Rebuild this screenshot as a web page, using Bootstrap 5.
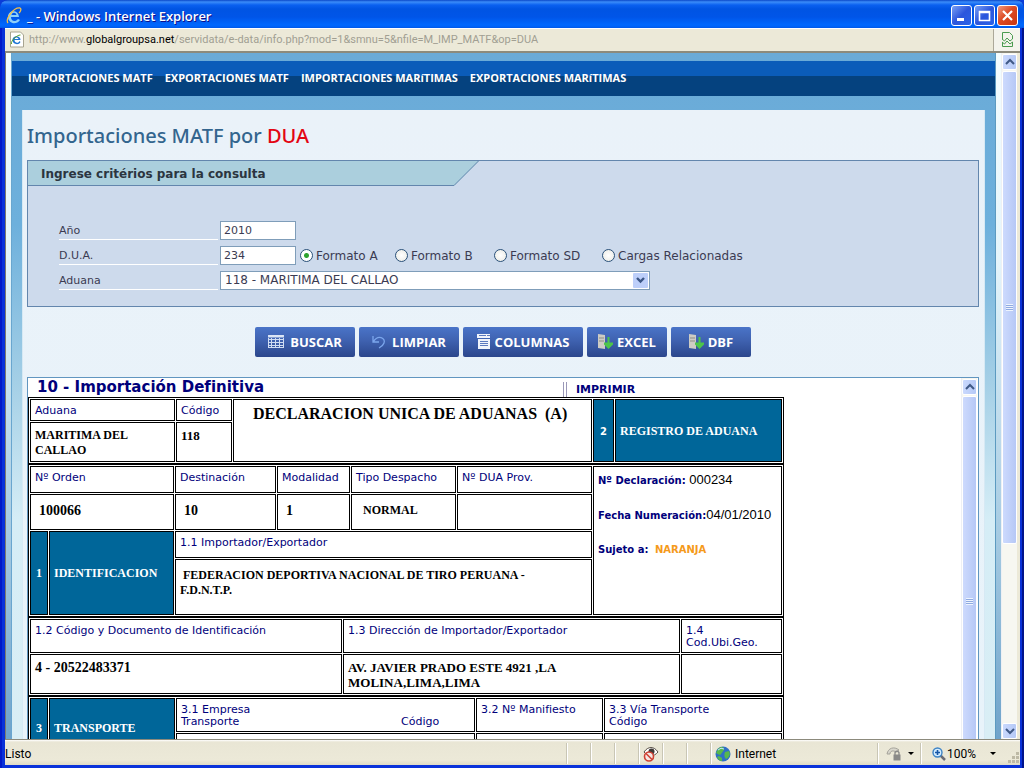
<!DOCTYPE html>
<html lang="es">
<head>
<meta charset="utf-8">
<meta name="viewport" content="width=device-width, initial-scale=1">
<title>Importaciones MATF por DUA</title>
<link href="https://cdn.jsdelivr.net/npm/bootstrap@5.3.0/dist/css/bootstrap.min.css" rel="stylesheet">
<style>
:root{--navy:#00007b;--line:#6386ad;--verdana:"DejaVu Sans",Verdana,sans-serif;--treb:"Open Sans","Trebuchet MS",sans-serif;--tahoma:"Roboto",Tahoma,sans-serif}
body{font-family:var(--verdana);font-size:11px;line-height:14px;background:#0a3cd8;overflow:hidden}
button{font:inherit}
svg{display:block;flex:none}
.win{background:#0831d9;padding:0 4px 3px 5px;border-radius:8px 8px 0 0;box-shadow:inset 2px 0 #0019c8,inset -2px 0 #00138c}
.titlebar{height:30px;margin:0 -4px 0 -5px;padding:4px 6px 0 6px;gap:5px;border-radius:8px 8px 0 0;color:#fff;font:600 13px/18px var(--treb);text-shadow:1px 1px #0f1089;
background:linear-gradient(#0a47c8 0,#3b8cf9 2px,#0a60f0 5px,#0054e3 9px,#0055e8 17px,#0068fe 25px,#0061f5 27px,#0040c0 30px)}
.cap{width:21px;height:21px;padding:0;border:1px solid #fff;border-radius:3px;background:linear-gradient(135deg,#7aa0f5,#2c56dc 50%,#2a62e8)}
.cap svg{margin:auto}
.cap-close{background:linear-gradient(135deg,#f09a80,#dd4a24 45%,#c83510)}
.address{height:25px;background:#ece9d8;border-bottom:2px solid #8c8a7c;border-top:1px solid #fff}
.url{font:11px/22px var(--tahoma);color:#a19f93;text-decoration:none}
.url b{font-weight:400;color:#000}
.broken{border:0;border-left:1px solid #aca899;background:#f4f3ec;width:27px}
.outer{background:linear-gradient(#f4fdff,#e4f5fb 30%,#a6cbe2 70%,#6fa3ca);padding:0 5px;border-left:1px solid #7d7b6e}
.sheet{background:linear-gradient(#6aaad7 0,#6db0dc 25%,#a4cfe6 48%,#d5edf6 68%,#d9eef5);border-left:1px solid #69a6cf;border-right:1px solid #5c9ac0;padding:0 10px}
.menu{margin:8px -10px 14px;height:35px;padding:0 16px;gap:12px;background:linear-gradient(#0b5cb9 0 15px,#05427f 15px)}
.menu a{color:#fff;text-decoration:none;font:700 11px/16px var(--treb)}
.content{background:linear-gradient(#eaf2f9,#e8f3fa);padding:0 5px 0 4px;border-left:1px solid #d6e9f4;border-right:1px solid #d6e9f4}
.heading{font:500 20px/28px "Noto Sans",var(--treb);color:#33658e;margin:12px 0 10px}
.heading b{font-weight:500;color:#e30613}
.criteria{border:1px solid var(--line);background:#cddaec;height:147px}
.tabhead{background:#abcfdd;border-bottom:1px solid var(--line);height:25px;width:426px;padding-left:13px;font:700 12px/26px var(--verdana);color:#2b3540;margin:0}
.fields{padding:35px 31px 0;color:#3b3b52}
.frow{height:25px}
.flabel{width:159px;height:19px;line-height:19px;border-bottom:1px solid #fff;margin-right:2px}
.txt{width:76px;height:19px;border:1px solid #7f9db9;background:#fff;padding:0 3px;font:11px/17px var(--verdana);color:#3b3b52}
.radios{height:20px;font-size:12px}
.rad{appearance:none;width:13px;height:13px;margin:0 3px 0 0;border:1px solid #2b5179;border-radius:50%;background:radial-gradient(#fff,#e9e9e2)}
.rad:checked{background:radial-gradient(#2fa32f 0 2px,#fff 3px)}
.sel{appearance:none;width:430px;height:19px;border:1px solid #7f9db9;border-radius:0;padding:0 4px;font:12px/17px var(--verdana);color:#3b3b52;background:#fff url("data:image/svg+xml,%3Csvg xmlns='http://www.w3.org/2000/svg' width='16' height='17'%3E%3Crect width='15' height='15' y='1' rx='1' fill='%23bdcffa'/%3E%3Cpath d='M4 6l3.5 3.5L11 6' fill='none' stroke='%233b5686' stroke-width='2.4'/%3E%3C/svg%3E") no-repeat right 0 center}
.actions{padding:20px 0;gap:4px}
.act{height:30px;border:0;border-radius:2px;padding:0;color:#fff;font:700 13px/30px var(--treb);background:linear-gradient(#4a74c8,#3f62b0 45%,#2b468c);gap:6px}
.act-tight{gap:4px}
.w100{width:100px}.w120{width:120px}.w80{width:80px}
.result{border:1px solid #6196c0;border-bottom:0;background:#fff;min-height:0;padding-right:1px}
.dochead{height:19px;color:var(--navy)}
.dochead h2{font:700 15px/19px var(--verdana);margin:0 0 0 9px;width:526px}
.imprimir{border-left:1px solid #9a98b8;height:15px;margin-top:4px;color:var(--navy);text-decoration:none;font:700 11px/15px var(--verdana)}
.imprimir span{border-left:1px solid #9a98b8;margin-left:2px;padding-left:9px;height:15px;display:block}
.dua{table-layout:fixed;width:756px;border:1px solid #000;border-collapse:separate;border-spacing:1px;background:#fff}
.dua td,.dua th{border:1px solid #000;padding:5px 4px 0;vertical-align:top;text-align:left;overflow:hidden}
.dua th{font:400 11px/12px var(--verdana);color:var(--navy)}
.dua td{font:700 13px/15px "Liberation Serif","Times New Roman",serif;color:#000}
.dua td.cap12{font-size:12px}
.dua td.dig{font-size:14px}
.dua td.sec{background:#069;color:#fff;vertical-align:middle;font-size:12px;padding-top:2px}
.dua td.num{padding:2px 0 0;text-align:center}
.dua td.vnum{font-family:var(--verdana);font-size:10px}
.dua td.big{font-size:16px;line-height:20px;padding:4px 0 0 19px}
.dua td.reg{font:700 10px/16px var(--verdana);color:var(--navy)}
.dua .reg p{margin:0 0 18px;white-space:nowrap}
.dua .reg span{font:13px/16px "Liberation Sans",Arial,sans-serif;color:#000}
.dua .reg em{font-style:normal;color:#f59a1b;margin-left:3px}
.dua td.in{padding:8px 0 0 8px}
.dua td.low{padding-top:8px}
.vbar{width:16px;background:#f7f7f1;border-left:1px solid #eef0f4;padding:1px 0 0}
.vbar button{width:15px;height:16px;padding:0;border:1px solid #fff;border-radius:2px;background:linear-gradient(90deg,#cad9fd,#b5c9f7);flex:none}
.thumb{width:15px;border:1px solid #fff;border-radius:2px;background:linear-gradient(90deg,#cddafd,#b6c8f6);margin-top:1px}
.thumb i{width:7px;height:7px;background:repeating-linear-gradient(#eef4fe 0 1px,#8faae0 1px 2px)}
.status{height:26px;background:linear-gradient(#8c8a7c 0,#8c8a7c 1px,#fff 1px,#e9e6d5 3px,#ece9d8 80%,#dedac6);font:12px/24px var(--tahoma);color:#000;padding-top:3px}
.cell{border-left:1px solid #c9c6b5;box-shadow:inset 1px 0 #fff;width:24px;height:21px}
</style>
</head>
<body>
<div class="win vh-100 d-flex flex-column">
  <header class="titlebar d-flex align-items-center">
    <svg width="16" height="18" viewBox="0 0 16 18"><path d="M13 10H5c0 5 5 5 7 2l2 1C10 19 2 16 2 10 2 3 12 2 13 10M5.500 8h5C10 5 6 5 5.500 8" fill="#8fd0f8"/><path d="M2 16C-1 12 8 0 14 1c2 1 0 4-1 5" fill="none" stroke="#f4c04a" stroke-width="1.300"/></svg>
    <span class="flex-grow-1">_ - Windows Internet Explorer</span>
    <div class="d-flex" style="gap:2px">
      <button class="cap" aria-label="Minimizar"><svg width="15" height="15"><path d="M3 10h7v3H3z" fill="#fff"/></svg></button>
      <button class="cap" aria-label="Maximizar"><svg width="15" height="15"><path d="M2.500 3.500h10v9h-10zM2 4.500h11" fill="none" stroke="#fff" stroke-width="1.600"/></svg></button>
      <button class="cap cap-close" aria-label="Cerrar"><svg width="15" height="15"><path d="M3 3l9 9M12 3l-9 9" stroke="#fff" stroke-width="2.200"/></svg></button>
    </div>
  </header>
  <div class="address d-flex align-items-center flex-shrink-0">
    <svg class="ms-1 me-1" width="16" height="17" viewBox="0 0 15 17"><path d="M1 1h10l3 3v12H1z" fill="#fff" stroke="#a8a490"/><path d="M11 9H5c0 3 4 4 5 1l1 1C9 15 3 13 3 9c0-5 8-5 8 0M5 8h4C8 6 6 6 5 8" fill="#1d74d4"/><path d="M2 13C1 10 7 4 11 4" stroke="#5aa531" fill="none"/></svg>
    <a class="url flex-grow-1" href="#">http://www.<b>globalgroupsa.net</b>/servidata/e-data/info.php?mod=1&amp;smnu=5&amp;nfile=M_IMP_MATF&amp;op=DUA</a>
    <button class="broken h-100 d-flex align-items-center justify-content-center" aria-label="Vista de compatibilidad"><svg width="13" height="15" viewBox="0 0 13 15"><path d="M1.500 7V.500h7l3 3V7M1.500 10v4.500h10V10M1 7l2.500 2L6 6l3 3 2.500-2M1 10l2.500 2L6 9l3 3 2.500-2" fill="none" stroke="#4b9b50"/></svg></button>
  </div>

  <div class="flex-grow-1 d-flex overflow-hidden">
    <div class="outer flex-grow-1 d-flex">
    <div class="sheet flex-grow-1 d-flex flex-column">
      <nav class="menu d-flex align-items-center flex-shrink-0">
        <a href="#">IMPORTACIONES MATF</a><a href="#">EXPORTACIONES MATF</a><a href="#">IMPORTACIONES MARíTIMAS</a><a href="#">EXPORTACIONES MARíTIMAS</a>
      </nav>
      <main class="content flex-grow-1 d-flex flex-column overflow-hidden">
        <h1 class="heading">Importaciones MATF por <b>DUA</b></h1>
        <form class="criteria flex-shrink-0">
          <div class="d-flex"><h2 class="tabhead">Ingrese critérios para la consulta</h2>
          <svg width="26" height="25"><path d="M0 0h25L0 25z" fill="#abcfdd"/><path d="M0 24.500L24.500 0" stroke="#6386ad"/></svg></div>
          <div class="fields">
            <div class="frow d-flex"><label class="flabel" for="anio">Año</label><input class="txt" id="anio" value="2010"></div>
            <div class="frow d-flex"><label class="flabel" for="dua">D.U.A.</label><input class="txt" id="dua" value="234">
              <div class="radios d-flex ms-1">
                <label class="d-flex align-items-center" style="width:95px"><input class="rad" type="radio" name="f" checked>Formato A</label>
                <label class="d-flex align-items-center" style="width:99px"><input class="rad" type="radio" name="f">Formato B</label>
                <label class="d-flex align-items-center" style="width:108px"><input class="rad" type="radio" name="f">Formato SD</label>
                <label class="d-flex align-items-center"><input class="rad" type="radio" name="f">Cargas Relacionadas</label>
              </div></div>
            <div class="frow d-flex"><label class="flabel" for="aduana">Aduana</label><select class="sel" id="aduana"><option>118 - MARITIMA DEL CALLAO</option></select></div>
          </div>
        </form>
        <div class="actions d-flex justify-content-center flex-shrink-0">
          <button class="act w100 d-flex align-items-center justify-content-center"><svg width="16" height="13"><path d="M0 0h16v2H0zM.500 3v10M3.500 3v10M7.500 3v10M11.500 3v10M15.500 3v10M0 4.500h16M0 7.500h16M0 10.500h16M0 12.500h16" stroke="#cfdcf2" fill="#e8effa"/></svg>BUSCAR</button>
          <button class="act w100 d-flex align-items-center justify-content-center"><svg width="14" height="14"><path d="M1 1v6h6M1.500 6.500C6-1 14 3 12 8c-1 3-3 4-5 5" fill="none" stroke="#7ba6ec" stroke-width="1.300"/></svg>LIMPIAR</button>
          <button class="act act-tight w120 d-flex align-items-center justify-content-center"><svg width="14" height="15"><path d="M0 0h13v4H0zM1 5h12v10H1z" fill="#f1f4fb"/><path d="M2 1.500h7M3 7.500h8M3 9.500h8M3 11.500h8M10 1.500h3" stroke="#5c7abf"/></svg>COLUMNAS</button>
          <button class="act act-tight w80 d-flex align-items-center justify-content-center"><svg width="15" height="16"><path d="M0 0l7 1v14l-7-1z" fill="#cdccc4"/><path d="M1 4h5M1 7h5" stroke="#8d8d88"/><path d="M9.500 3h2v5.500H15v2L10.500 15 6 10.500v-2h3.500z" fill="#4cc54a"/></svg>EXCEL</button>
          <button class="act act-tight w80 d-flex align-items-center justify-content-center"><svg width="15" height="16"><path d="M0 0l7 1v14l-7-1z" fill="#cdccc4"/><path d="M1 4h5M1 7h5" stroke="#8d8d88"/><path d="M9.500 3h2v5.500H15v2L10.500 15 6 10.500v-2h3.500z" fill="#4cc54a"/></svg>DBF</button>
        </div>
        <section class="result flex-grow-1 d-flex overflow-hidden">
          <div class="flex-grow-1 overflow-hidden">
            <div class="dochead d-flex"><h2>10 - Importación Definitiva</h2><a class="imprimir" href="#"><span>IMPRIMIR</span></a></div>
            <table class="dua">
              <colgroup><col style="width:145px"><col style="width:56px"><col style="width:359px"><col style="width:21px"><col style="width:167px"></colgroup>
              <tr style="height:22px"><th>Aduana</th><th>Código</th><td rowspan="2" class="big">DECLARACION UNICA DE ADUANAS &nbsp;(A)</td><td rowspan="2" class="sec num vnum">2</td><td rowspan="2" class="sec">REGISTRO DE ADUANA</td></tr>
              <tr style="height:40px"><td class="cap12">MARITIMA DEL<br>CALLAO</td><td>118</td></tr>
            </table>
            <table class="dua">
              <colgroup><col style="width:18px"><col style="width:125px"><col style="width:101px"><col style="width:73px"><col style="width:105px"><col style="width:135px"><col style="width:189px"></colgroup>
              <tr style="height:27px"><th colspan="2">Nº Orden</th><th>Destinación</th><th>Modalidad</th><th>Tipo Despacho</th><th>Nº DUA Prov.</th>
                <td rowspan="4" class="reg"><p>Nº Declaración: <span>000234</span></p><p>Fecha Numeración:<span>04/01/2010</span></p><p>Sujeto a: <em>NARANJA</em></p></td></tr>
              <tr style="height:36px"><td colspan="2" class="in dig">100066</td><td class="in dig">10</td><td class="in dig">1</td><td class="in cap12">&nbsp;NORMAL</td><td></td></tr>
              <tr style="height:27px"><td rowspan="2" class="sec num">1</td><td rowspan="2" class="sec">IDENTIFICACION</td><th colspan="4">1.1 Importador/Exportador</th></tr>
              <tr style="height:56px"><td colspan="4" class="cap12 low">&nbsp;FEDERACION DEPORTIVA NACIONAL DE TIRO PERUANA -<br>F.D.N.T.P.</td></tr>
            </table>
            <table class="dua">
              <colgroup><col style="width:312px"><col style="width:337px"><col style="width:101px"></colgroup>
              <tr style="height:34px"><th>1.2 Código y Documento de Identificación</th><th>1.3 Dirección de Importador/Exportador</th><th>1.4<br>Cod.Ubi.Geo.</th></tr>
              <tr style="height:40px"><td class="dig">4 - 20522483371</td><td>AV. JAVIER PRADO ESTE 4921 ,LA<br>MOLINA,LIMA,LIMA</td><td></td></tr>
            </table>
            <table class="dua">
              <colgroup><col style="width:18px"><col style="width:126px"><col style="width:299px"><col style="width:127px"><col style="width:178px"></colgroup>
              <tr style="height:34px"><td rowspan="2" class="sec num">3</td><td rowspan="2" class="sec">TRANSPORTE</td><th><div class="d-flex align-items-end"><span style="width:220px">3.1 Empresa<br>Transporte</span><span>Código</span></div></th><th>3.2 Nº Manifiesto</th><th>3.3 Vía Transporte<br>Código</th></tr>
              <tr style="height:24px"><td></td><td></td><td></td></tr>
            </table>
          </div>
          <div class="vbar d-flex flex-column flex-shrink-0">
            <button aria-label="Subir"><svg class="m-auto" width="10" height="8"><path d="M1 6l4-4 4 4" fill="none" stroke="#3f5986" stroke-width="2"/></svg></button>
            <div class="thumb flex-shrink-0 d-flex align-items-center justify-content-center" style="height:412px"><i></i></div>
          </div>
        </section>
      </main>
    </div>
    </div>
    <div class="vbar d-flex flex-column">
      <button aria-label="Subir"><svg class="m-auto" width="10" height="8"><path d="M1 6l4-4 4 4" fill="none" stroke="#3f5986" stroke-width="2"/></svg></button>
      <div class="thumb d-flex align-items-center justify-content-center" style="height:69%"><i></i></div>
      <button class="mt-auto" aria-label="Bajar"><svg class="m-auto" width="10" height="8"><path d="M1 2l4 4 4-4" fill="none" stroke="#3f5986" stroke-width="2"/></svg></button>
    </div>
    <div style="width:3px;background:#ece9d8"></div>
  </div>

  <footer class="status d-flex align-items-center">
    <span class="flex-grow-1">Listo</span>
    <span class="cell"></span><span class="cell"></span><span class="cell"></span>
    <span class="cell d-flex align-items-center justify-content-center"><svg width="16" height="16"><path d="M1 6C5 0 11 0 15 6 11 11 5 11 1 6" fill="#fff" stroke="#5a5148"/><circle cx="8.500" cy="5.500" r="3" fill="#3f3a36"/><circle cx="6" cy="10.500" r="4.500" fill="#f6e6e2" stroke="#cf4032" stroke-width="1.600"/><path d="M3 7.500l6 6" stroke="#cf4032" stroke-width="1.600"/></svg></span>
    <span class="cell"></span><span class="cell"></span>
    <span class="cell d-flex align-items-center" style="width:167px;padding-left:4px;gap:4px"><svg width="16" height="16"><circle cx="8" cy="8" r="7.500" fill="#2f6fc6"/><path d="M3 3c3-3 6-2 6 0S7 6 6 8 3 8 1 7zM10 6l4-1c2 3 0 7-3 8-2-2-2-4-1-7M4 10l3 2v3c-3 0-4-2-5-4z" fill="#58b84b"/><path d="M3 4q3-3 6-1" stroke="#bfe6ff" fill="none"/></svg>Internet</span>
    <span class="cell d-flex align-items-center" style="width:43px;padding-left:8px;gap:7px"><svg width="15" height="15"><path d="M1 8C2 2 8 0 13 4l-3 2C7 4 4 5 4 8z" fill="#d9d7cd" stroke="#a5a39a"/><path d="M7.500 8.500h7v6h-7z" fill="#8a8a88"/><path d="M9 9V6.500q2-2.500 4 0V9" fill="none" stroke="#8a8a88" stroke-width="1.300"/></svg><svg width="6" height="4"><path d="M0 0h6L3 3z"/></svg></span>
    <span class="cell d-flex align-items-center" style="width:100px;padding-left:11px"><svg width="14" height="14"><path d="M8 8l5 5" stroke="#6c6c74" stroke-width="2.500"/><circle cx="5.500" cy="5.500" r="4.500" fill="#d5edff" stroke="#3d83c5" stroke-width="1.400"/><path d="M5.500 3v5M3 5.500h5" stroke="#1657a6" stroke-width="1.600"/></svg><span style="width:44px;padding-left:1px">100%</span><svg width="6" height="4"><path d="M0 0h6L3 3z"/></svg><svg class="ms-auto align-self-end" width="12" height="12"><path d="M8 0h3v3H8zM4 4h3v3H4zM8 4h3v3H8zM0 8h3v3H0zM4 8h3v3H4zM8 8h3v3H8z" fill="#bdb9a5"/></svg></span>
  </footer>
</div>
<script src="https://cdn.jsdelivr.net/npm/bootstrap@5.3.0/dist/js/bootstrap.bundle.min.js"></script>
</body>
</html>
